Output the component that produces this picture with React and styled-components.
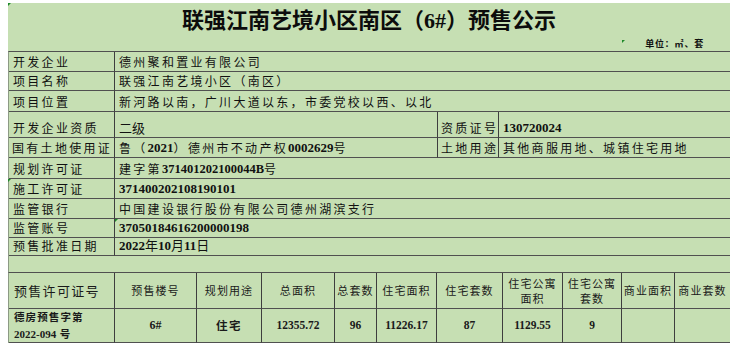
import React from "react";
import styled, { createGlobalStyle } from "styled-components";

const GlobalStyle = createGlobalStyle`
  html, body {
    margin: 0;
    padding: 0;
    background: #ffffff;
  }
  body {
    font-family: "Noto Sans CJK SC", sans-serif;
    color: #111;
  }
`;

const LINE = "#505050";

const Sheet = styled.div`
  position: relative;
  margin: 3px 0 0 8px;
  width: 722px;
  background: #c6dfb3;
`;

const TitleRow = styled.div`
  height: 30px;
  display: flex;
  align-items: center;
  justify-content: center;
  font-family: "Liberation Serif", "Noto Sans CJK SC", serif;
  font-weight: 700;
  font-size: 22px;
  color: #0c0c0c;
`;

const UnitRow = styled.div`
  position: relative;
  height: 18px;
  display: flex;
  align-items: flex-end;
  justify-content: flex-end;
  padding-right: 26px;
  box-sizing: border-box;
`;

const Unit = styled.span`
  font-size: 9px;
  font-weight: 700;
  letter-spacing: 0.8px;
  line-height: 13px;
  padding-bottom: 1px;
`;

const Marker = styled.span`
  position: absolute;
  left: ${(p) => p.$x}px;
  top: ${(p) => p.$y}px;
  width: 0;
  height: 0;
  border-top: 3px solid #1f8a2a;
  border-right: 3px solid transparent;
`;

const InfoGrid = styled.div`
  display: grid;
  grid-template-columns: 106px 323px 61px 231px;
  grid-template-rows: 20px 19px 21px 26px 20px 21px 20px 20px 19px 18px;
  border-top: 1px solid ${LINE};
  border-left: 1px solid #8c9a84;
`;

const Cell = styled.div`
  position: relative;
  display: flex;
  align-items: flex-end;
  padding: 0 0 1px ${(p) => (p.$pad != null ? p.$pad : 4)}px;
  border-bottom: 1px solid ${LINE};
  border-right: ${(p) => (p.$last ? "none" : `1px solid #3e3e3e`)};
  grid-column: ${(p) => (p.$span ? `span ${p.$span}` : "auto")};
  font-size: 12px;
  line-height: 16px;
  letter-spacing: ${(p) => (p.$tight ? "0" : "2.3px")};
  white-space: nowrap;
  overflow: visible;
  box-sizing: border-box;
`;

const Num = styled.span`
  font-family: "Liberation Serif", serif;
  font-weight: 700;
  font-size: ${(p) => p.$size || 13}px;
  letter-spacing: 0;
`;

const Plain = styled.span`
  font-size: 13px;
  letter-spacing: 0;
`;

const Spacer = styled.div`
  height: 16px;
  border-left: 1px solid #8c9a84;
`;

const PermitGrid = styled.div`
  display: grid;
  grid-template-columns: 106px 82px 65px 73px 42px 60px 66px 60px 59px 53px 55px;
  grid-template-rows: 36px 34px;
  border-top: 1px solid ${LINE};
  border-left: 1px solid #8c9a84;
`;

const Head = styled.div`
  display: flex;
  align-items: center;
  justify-content: ${(p) => (p.$left ? "flex-start" : "center")};
  padding-left: ${(p) => (p.$left ? 5 : 0)}px;
  text-align: ${(p) => (p.$left ? "left" : "center")};
  border-bottom: 1px solid ${LINE};
  border-right: ${(p) => (p.$last ? "none" : `1px solid #3e3e3e`)};
  font-size: ${(p) => (p.$big ? 13 : 11)}px;
  letter-spacing: ${(p) => (p.$big ? 1.3 : 1.1)}px;
  line-height: 15px;
  white-space: pre-line;
  color: #1a1a1a;
`;

const Data = styled(Head)`
  font-weight: 700;
  letter-spacing: 1px;
`;

const PermitNo = styled.div`
  display: flex;
  flex-direction: column;
  align-items: flex-start;
  font-size: 10.5px;
  line-height: 17px;
  letter-spacing: 1.1px;
`;

const info = [
  { label: "开发企业", value: "德州聚和置业有限公司" },
  { label: "项目名称", value: "联强江南艺境小区（南区）" },
  { label: "项目位置", value: "新河路以南，广川大道以东，市委党校以西、以北" },
];

const lower = [
  { label: "规划许可证", value: <>建字第<Num $size={12.5}>371401202100044B</Num>号</> },
  { label: "施工许可证", value: <Num>371400202108190101</Num>, marker: true },
  { label: "监管银行", value: "中国建设银行股份有限公司德州湖滨支行" },
  { label: "监管账号", value: <Num>37050184616200000198</Num>, valueMarker: true },
  {
    label: "预售批准日期",
    value: (
      <Plain>
        <Num>2022</Num>年<Num>10</Num>月<Num>11</Num>日
      </Plain>
    ),
  },
];

const heads = [
  "预售楼号",
  "规划用途",
  "总面积",
  "总套数",
  "住宅面积",
  "住宅套数",
  "住宅公寓\n面积",
  "住宅公寓\n套数",
  "商业面积",
  "商业套数",
];

const figures = ["12355.72", "96", "11226.17", "87", "1129.55", "9"];

const App = () => {
  return (
    <>
      <GlobalStyle />
      <Sheet>
        <Marker $x={0} $y={0} />
        <TitleRow>联强江南艺境小区南区（6#）预售公示</TitleRow>
        <UnitRow>
          <Marker $x={614} $y={7} />
          <Unit>单位：㎡、套</Unit>
        </UnitRow>

        <InfoGrid>
          {info.map((row) => (
            <React.Fragment key={row.label}>
              <Cell>{row.label}</Cell>
              <Cell $span={3} $last>
                {row.value}
              </Cell>
            </React.Fragment>
          ))}

          <Cell>开发企业资质</Cell>
          <Cell $tight>
            <Plain>二级</Plain>
          </Cell>
          <Cell $pad={3}>资质证号</Cell>
          <Cell $last>
            <Num>130720024</Num>
          </Cell>

          <Cell $pad={3}>国有土地使用证</Cell>
          <Cell>
            鲁（<Num>2021</Num>）德州市不动产权<Num>0002629</Num>号
          </Cell>
          <Cell $pad={3}>土地用途</Cell>
          <Cell $last>其他商服用地、城镇住宅用地</Cell>

          {lower.map((row) => (
            <React.Fragment key={row.label}>
              <Cell>
                {row.marker && <Marker $x={-1} $y={0} />}
                {row.label}
              </Cell>
              <Cell $span={3} $last>
                {row.valueMarker && <Marker $x={0} $y={0} />}
                {row.value}
              </Cell>
            </React.Fragment>
          ))}
        </InfoGrid>

        <Spacer />

        <PermitGrid>
          <Head $left $big>
            预售许可证号
          </Head>
          {heads.map((h, i) => (
            <Head key={h} $last={i === heads.length - 1}>
              {h}
            </Head>
          ))}

          <Data $left>
            <PermitNo>
              <span>德房预售字第</span>
              <span>
                <Num $size={11}>2022-094</Num> 号
              </span>
            </PermitNo>
          </Data>
          <Data>
            <Num $size={12}>6#</Num>
          </Data>
          <Data style={{ fontSize: 11.5, letterSpacing: 1.5 }}>住宅</Data>
          {figures.map((f, i) => (
            <Data key={i}>
              <Num $size={11.5}>{f}</Num>
            </Data>
          ))}
          <Data />
          <Data $last />
        </PermitGrid>
      </Sheet>
    </>
  );
};

export default App;
